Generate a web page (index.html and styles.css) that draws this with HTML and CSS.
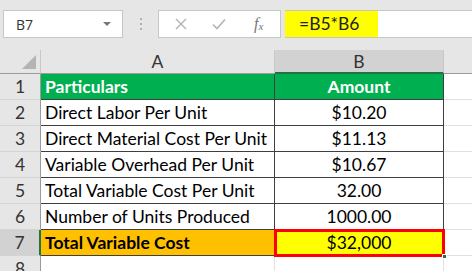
FILE: index.html
```html
<!DOCTYPE html>
<html>
<head>
<meta charset="utf-8">
<link rel="stylesheet" href="styles.css">
</head>
<body>
<div class="app">
  <div class="topbar">
    <div class="namebox"><span class="ref">B7</span><span class="caret"></span></div>
    <div class="dots"><i></i><i></i><i></i></div>
    <div class="buttons">
      <svg class="btn bx" width="14" height="14" viewBox="0 0 14 14"><path d="M2 2 L12 12 M12 2 L2 12" stroke="#b3b3b3" stroke-width="1.4" fill="none"/></svg>
      <svg class="btn bc" width="16" height="14" viewBox="0 0 16 14"><path d="M2 7.5 L6 11.5 L14 2.5" stroke="#b3b3b3" stroke-width="1.6" fill="none"/></svg>
      <span class="fx">f<sub>x</sub></span>
    </div>
    <div class="formula"><span class="ftext">=B5*B6</span></div>
  </div>
  <div class="sheet">
    <div class="hd corner"><span class="tri"></span></div>
    <div class="hd col">A</div>
    <div class="hd col sel">B</div>
    <div class="hd rest"></div>

    <div class="rh">1</div>
    <div class="c a green">Particulars</div>
    <div class="c b green">Amount</div>
    <div class="c e"></div>

    <div class="rh">2</div>
    <div class="c a">Direct Labor Per Unit</div>
    <div class="c b">$10.20</div>
    <div class="c e"></div>

    <div class="rh">3</div>
    <div class="c a">Direct Material Cost Per Unit</div>
    <div class="c b">$11.13</div>
    <div class="c e"></div>

    <div class="rh">4</div>
    <div class="c a">Variable Overhead Per Unit</div>
    <div class="c b">$10.67</div>
    <div class="c e"></div>

    <div class="rh">5</div>
    <div class="c a">Total Variable Cost Per Unit</div>
    <div class="c b">32.00</div>
    <div class="c e"></div>

    <div class="rh">6</div>
    <div class="c a">Number of Units Produced</div>
    <div class="c b">1000.00</div>
    <div class="c e"></div>

    <div class="rh rsel">7</div>
    <div class="c a orange">Total Variable Cost</div>
    <div class="c b yellow">$32,000<span class="handle"></span></div>
    <div class="c e"></div>

    <div class="rh">8</div>
    <div class="c blank"></div>
    <div class="c blank"></div>
    <div class="c e"></div>
  </div>
</div>
</body>
</html>
```
FILE: styles.css
```css
* { box-sizing: border-box; }
html, body { margin: 0; padding: 0; }
body {
  width: 472px;
  height: 271px;
  overflow: hidden;
  background: #fff;
  font-family: Lato, "Open Sans", sans-serif;
  color: #000;
}
.app { display: flex; flex-direction: column; }

.topbar {
  height: 50px;
  background: #e6e6e6;
  display: flex;
  align-items: flex-start;
  padding: 10px 0 0 3px;
}
.namebox {
  width: 120px;
  height: 28px;
  background: #fff;
  border: 1px solid #c6c6c6;
  display: flex;
  align-items: center;
  justify-content: space-between;
  padding: 0 8px 0 12px;
  font-family: "Open Sans", sans-serif;
  font-size: 14px;
  color: #333;
}
.caret {
  width: 0; height: 0;
  border-left: 4px solid transparent;
  border-right: 4px solid transparent;
  border-top: 4px solid #777;
  margin-right: 3px;
}
.dots {
  width: 35px;
  height: 28px;
  display: flex;
  flex-direction: column;
  align-items: center;
  justify-content: center;
  gap: 3px;
}
.dots i { width: 2px; height: 2px; background: #b0b0b0; display: block; }
.buttons {
  width: 123px;
  height: 28px;
  background: #fff;
  border: 1px solid #c6c6c6;
  display: flex;
  align-items: center;
  padding-left: 15px;
}
.bx { margin-right: 23px; }
.bc { margin-right: 27px; }
.fx {
  font-family: "Liberation Serif", serif;
  font-style: italic;
  font-size: 16px;
  color: #777;
}
.fx sub { font-size: 11px; vertical-align: -1px; }
.formula {
  margin-left: 4px;
  flex: 1;
  height: 28px;
  background: #fff;
  border-top: 1px solid #c6c6c6;
  border-bottom: 1px solid #c6c6c6;
}
.ftext {
  display: inline-block;
  width: 93px;
  height: 26px;
  background: #ffff00;
  font-family: Lato, sans-serif;
  font-size: 17.5px;
  line-height: 26px;
  padding-left: 14px;
  color: #222;
}

.sheet {
  display: grid;
  grid-template-columns: 41px 234px 169px 1fr;
  grid-template-rows: 24px repeat(8, 26px);
}
.hd {
  background: #e6e6e6;
  border-right: 1px solid #c8c8c8;
  border-bottom: 1px solid #9b9b9b;
  display: flex;
  align-items: center;
  justify-content: center;
  font-size: 17.5px;
  color: #333;
}
.corner { position: relative; border-right: 1px solid #c8c8c8; }
.tri {
  position: absolute;
  right: 4px;
  bottom: 4px;
  width: 0; height: 0;
  border-left: 14px solid transparent;
  border-bottom: 14px solid #b4b4b4;
}
.col.sel {
  background: #d2d2d2;
  border-bottom: 2px solid #217346;
  color: #333;
}
.rest { border-right: none; }

.rh {
  background: #e6e6e6;
  border-right: 1px solid #9b9b9b;
  border-bottom: 1px solid #d4d4d4;
  display: flex;
  align-items: center;
  justify-content: center;
  font-size: 17.5px;
  color: #333;
}
.rh.rsel { background: #d2d2d2; border-right: 2px solid #217346; }

.c {
  border-right: 1px solid #3f3f3f;
  border-bottom: 1px solid #3f3f3f;
  display: flex;
  align-items: center;
  font-size: 17.5px;
  white-space: nowrap;
  overflow: hidden;
}
.c.a { padding-left: 4px; }
.c.b { justify-content: center; }
.c.e { border: none; border-bottom: 1px solid #e1e1e1; }
.c.blank { border: none; border-right: 1px solid #e1e1e1; }
.green { background: #00b050; color: #fff; font-weight: bold; }
.orange { background: #ffc000; font-weight: bold; }
.yellow {
  background: #ffff00;
  position: relative;
  overflow: visible;
  outline: 3px solid #ff0000;
  outline-offset: -2px;
}
.handle {
  position: absolute;
  right: -4px;
  bottom: -4px;
  width: 5px;
  height: 5px;
  background: #217346;
  border: 1px solid #fff;
}
```
